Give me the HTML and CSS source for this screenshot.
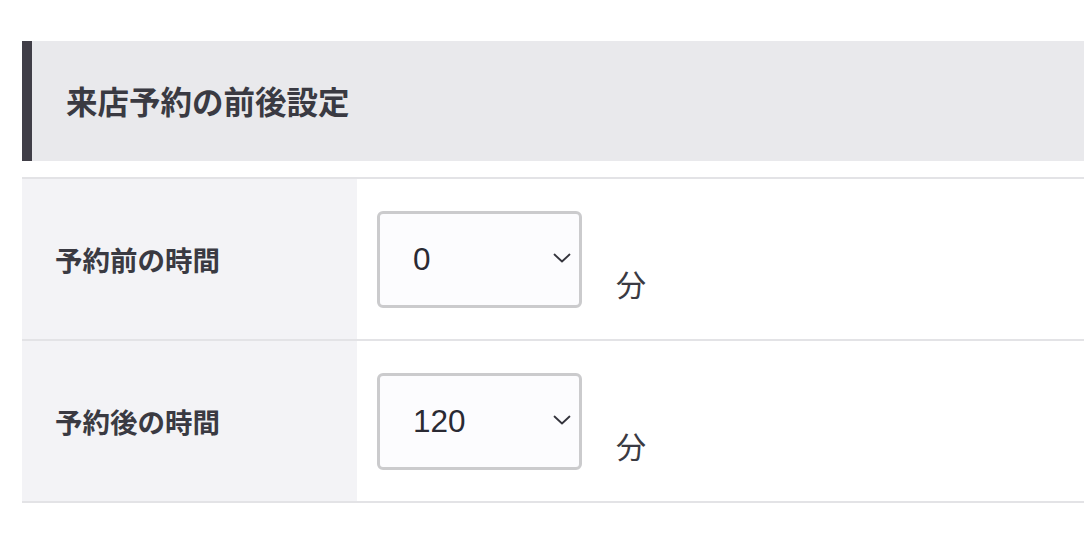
FILE: index.html
```html
<!DOCTYPE html>
<html lang="ja">
<head>
<meta charset="utf-8">
<title>来店予約の前後設定</title>
<link rel="stylesheet" href="styles.css">
</head>
<body>
<div class="page">
  <h2 class="section-title">来店予約の前後設定</h2>
  <div class="table">
    <div class="row">
      <div class="label">予約前の時間</div>
      <div class="field">
        <div class="select">
          <span class="value">0</span>
          <svg class="chevron" width="18" height="10" viewBox="0 0 18 10"><path d="M1.5 1.5 L9 8.5 L16.5 1.5" fill="none" stroke="#34343c" stroke-width="1.8" stroke-linecap="round" stroke-linejoin="round"/></svg>
        </div>
        <span class="unit">分</span>
      </div>
    </div>
    <div class="row">
      <div class="label">予約後の時間</div>
      <div class="field">
        <div class="select">
          <span class="value">120</span>
          <svg class="chevron" width="18" height="10" viewBox="0 0 18 10"><path d="M1.5 1.5 L9 8.5 L16.5 1.5" fill="none" stroke="#34343c" stroke-width="1.8" stroke-linecap="round" stroke-linejoin="round"/></svg>
        </div>
        <span class="unit">分</span>
      </div>
    </div>
  </div>
</div>
</body>
</html>
```

FILE: styles.css
```css
html, body {
  margin: 0;
  padding: 0;
  background: #ffffff;
}
body {
  font-family: "Noto Sans CJK JP", "Noto Sans", sans-serif;
  color: #34343c;
}
.page {
  padding: 41px 0 0 22px;
}
.section-title {
  margin: 0;
  height: 120px;
  box-sizing: border-box;
  display: flex;
  align-items: center;
  padding-left: 34px;
  padding-bottom: 2px;
  border-left: 10px solid #403e47;
  background: #e9e9ec;
  font-size: 31.5px;
  font-weight: 700;
  color: #3a3a42;
  letter-spacing: 0;
}
.table {
  margin-top: 16px;
  border-top: 2px solid #e3e3e6;
}
.row {
  display: flex;
  height: 162px;
  box-sizing: border-box;
  border-bottom: 2px solid #e3e3e6;
}
.label {
  width: 335px;
  flex: none;
  box-sizing: border-box;
  background: #f3f3f6;
  display: flex;
  align-items: center;
  padding-left: 33px;
  font-size: 27.5px;
  font-weight: 700;
  color: #3a3a42;
}
.field {
  flex: 1;
  display: flex;
  align-items: center;
  padding-left: 20px;
}
.select {
  width: 205px;
  height: 97px;
  box-sizing: border-box;
  border: 3px solid #cbcbcd;
  border-radius: 6px;
  background: #fcfcfe;
  display: flex;
  align-items: center;
  justify-content: space-between;
  padding: 0 8px 0 33px;
}
.value {
  font-family: "Liberation Sans", Arial, sans-serif;
  font-size: 31.5px;
  color: #2a2a33;
}
.chevron {
  display: block;
  margin-top: -2px;
}
.unit {
  margin-left: 34px;
  padding-top: 48px;
  font-size: 30px;
  color: #3a3a42;
}
```
